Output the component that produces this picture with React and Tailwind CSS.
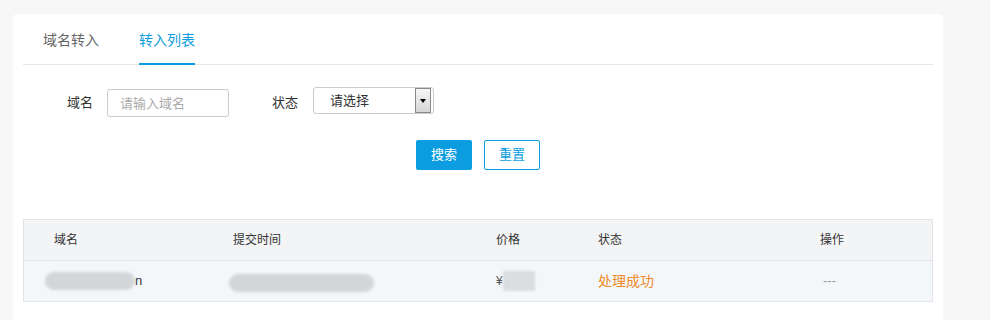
const font = { fontFamily: '"Liberation Sans", "Noto Sans CJK SC", sans-serif' }

function Blur({ className }) {
  return <div className={`rounded-full bg-[#d3d5d8] blur-[1.5px] ${className}`} />
}

export default function App() {
  return (
    <div style={font} className="min-h-[320px] bg-[#f7f7f7] pt-[14px] pl-[13px] text-[#333]">
      <div className="w-[930px] h-[306px] bg-white rounded-t-[4px] px-[10px]">
        {/* tabs */}
        <div className="flex h-[51px] gap-10 border-b border-[#e6e6e6] pl-5">
          <button className="-mb-px h-[51px] border-b-2 border-transparent pt-1 text-[14px] text-[#666]">域名转入</button>
          <button className="-mb-px h-[51px] border-b-2 border-[#0b9de0] pt-1 text-[14px] text-[#0b9de0]">转入列表</button>
        </div>

        {/* filters */}
        <div className="mt-[22px] flex items-start pl-[44px]">
          <span className="mt-[6px] mr-[14px] text-[13px]">域名</span>
          <input
            placeholder="请输入域名"
            className="mt-[2px] h-[28px] w-[122px] rounded-[3px] border border-[#cccccc] pl-[12px] text-[13px] outline-none placeholder:text-[#aaa]"
          />
          <span className="mt-[6px] ml-[43px] mr-[15px] text-[13px]">状态</span>
          <div className="flex h-[27px] w-[121px] items-center rounded-[3px] border border-[#cccccc] pr-[2px]">
            <span className="flex-1 pl-[16px] text-[13px]">请选择</span>
            <div className="flex h-[25px] w-[16px] items-center justify-center border border-[#8a8a8a] bg-gradient-to-b from-[#f6f6f6] to-[#d6d6d6]">
              <div className="h-0 w-0 border-x-[3.5px] border-t-[4px] border-x-transparent border-t-black" />
            </div>
          </div>
        </div>

        {/* buttons */}
        <div className="mt-[23px] flex justify-center gap-3">
          <button className="h-[30px] w-[56px] rounded-[2px] bg-[#0b9de0] text-[13px] text-white">搜索</button>
          <button className="h-[30px] w-[56px] rounded-[2px] border border-[#0b9de0] bg-white text-[13px] text-[#0b9de0]">重置</button>
        </div>

        {/* table */}
        <div className="mt-[49px] border border-[#e1e3e6] text-[12px]">
          <div className="grid h-[41px] grid-cols-[179px_263px_102px_222px_1fr] items-center border-b border-[#e1e3e6] bg-[#f3f4f6] pl-[30px]">
            <span>域名</span>
            <span>提交时间</span>
            <span>价格</span>
            <span>状态</span>
            <span>操作</span>
          </div>
          <div className="grid h-[40px] grid-cols-[179px_263px_102px_222px_1fr] items-center bg-[#f4f7fa] pl-[30px]">
            <div className="-ml-[9px] flex items-center">
              <Blur className="h-[18px] w-[90px]" />
              <span className="text-[13px]">n</span>
            </div>
            <div className="-ml-[4px]">
              <Blur className="h-[18px] w-[145px] mt-[4px]" />
            </div>
            <div className="flex items-center">
              <span className="text-[12px] text-[#555]">¥</span>
              <div className="h-[20px] w-[32px] bg-[#dcdddf] blur-[1px]" />
            </div>
            <span className="text-[14px] text-[#ef8a2a]">处理成功</span>
            <span className="pl-[3px] text-[13px] text-[#999]">---</span>
          </div>
        </div>
      </div>
    </div>
  )
}
